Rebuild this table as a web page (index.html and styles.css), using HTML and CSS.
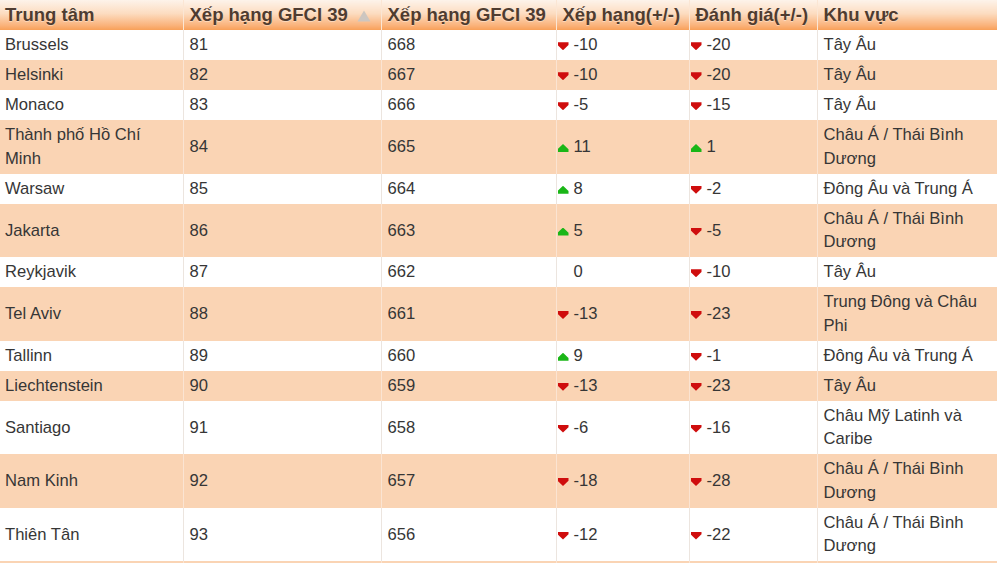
FILE: index.html
```html
<!DOCTYPE html>
<html lang="vi">
<head>
<meta charset="utf-8">
<title>GFCI 39</title>
<link rel="stylesheet" href="styles.css">
</head>
<body>
<table class="rank">
  <colgroup>
    <col class="c1"><col class="c2"><col class="c3"><col class="c4"><col class="c5"><col class="c6">
  </colgroup>
  <thead>
    <tr>
      <th>Trung tâm</th>
      <th>Xếp hạng GFCI 39 <svg class="sort" width="14" height="12" viewBox="0 0 14 12"><path d="M7 0.5 L13.5 11.5 L0.5 11.5 Z" fill="#cdc6c0"/></svg></th>
      <th>Xếp hạng GFCI 39</th>
      <th>Xếp hạng(+/-)</th>
      <th>Đánh giá(+/-)</th>
      <th>Khu vực</th>
    </tr>
  </thead>
  <tbody>
    <tr><td>Brussels</td><td>81</td><td>668</td><td class="chg"><i class="dn"></i>-10</td><td class="chg"><i class="dn"></i>-20</td><td>Tây Âu</td></tr>
    <tr><td>Helsinki</td><td>82</td><td>667</td><td class="chg"><i class="dn"></i>-10</td><td class="chg"><i class="dn"></i>-20</td><td>Tây Âu</td></tr>
    <tr><td>Monaco</td><td>83</td><td>666</td><td class="chg"><i class="dn"></i>-5</td><td class="chg"><i class="dn"></i>-15</td><td>Tây Âu</td></tr>
    <tr><td>Thành phố Hồ Chí Minh</td><td>84</td><td>665</td><td class="chg"><i class="up"></i>11</td><td class="chg"><i class="up"></i>1</td><td>Châu Á / Thái Bình Dương</td></tr>
    <tr><td>Warsaw</td><td>85</td><td>664</td><td class="chg"><i class="up"></i>8</td><td class="chg"><i class="dn"></i>-2</td><td>Đông Âu và Trung Á</td></tr>
    <tr><td>Jakarta</td><td>86</td><td>663</td><td class="chg"><i class="up"></i>5</td><td class="chg"><i class="dn"></i>-5</td><td>Châu Á / Thái Bình Dương</td></tr>
    <tr><td>Reykjavik</td><td>87</td><td>662</td><td class="chg"><i class="no"></i>0</td><td class="chg"><i class="dn"></i>-10</td><td>Tây Âu</td></tr>
    <tr><td>Tel Aviv</td><td>88</td><td>661</td><td class="chg"><i class="dn"></i>-13</td><td class="chg"><i class="dn"></i>-23</td><td>Trung Đông và Châu Phi</td></tr>
    <tr><td>Tallinn</td><td>89</td><td>660</td><td class="chg"><i class="up"></i>9</td><td class="chg"><i class="dn"></i>-1</td><td>Đông Âu và Trung Á</td></tr>
    <tr><td>Liechtenstein</td><td>90</td><td>659</td><td class="chg"><i class="dn"></i>-13</td><td class="chg"><i class="dn"></i>-23</td><td>Tây Âu</td></tr>
    <tr><td>Santiago</td><td>91</td><td>658</td><td class="chg"><i class="dn"></i>-6</td><td class="chg"><i class="dn"></i>-16</td><td>Châu Mỹ Latinh và Caribe</td></tr>
    <tr><td>Nam Kinh</td><td>92</td><td>657</td><td class="chg"><i class="dn"></i>-18</td><td class="chg"><i class="dn"></i>-28</td><td>Châu Á / Thái Bình Dương</td></tr>
    <tr><td>Thiên Tân</td><td>93</td><td>656</td><td class="chg"><i class="dn"></i>-12</td><td class="chg"><i class="dn"></i>-22</td><td>Châu Á / Thái Bình Dương</td></tr>
    <tr class="extra"><td></td><td></td><td></td><td></td><td></td><td></td></tr>
  </tbody>
</table>
</body>
</html>
```
FILE: styles.css
```css
html, body {
  margin: 0;
  padding: 0;
  background: #fff;
  overflow: hidden;
}
.rank {
  width: 997px;
  table-layout: fixed;
  border-collapse: collapse;
  font-family: "Liberation Sans", Arial, sans-serif;
  font-size: 16.6px;
  color: #363636;
}
.c1 { width: 183px; }
.c2 { width: 198px; }
.c3 { width: 175px; }
.c4 { width: 133px; }
.c5 { width: 128px; }
.c6 { width: 180px; }
.rank th {
  height: 30px;
  padding: 0 6px;
  text-align: left;
  font-size: 18.5px;
  font-weight: bold;
  color: #4f3c30;
  text-shadow: 0 1px 0 rgba(255,255,255,0.4);
  background: linear-gradient(to bottom, #fdf3ea 0%, #fcdcc0 45%, #fab27a 85%, #f8a058 100%);
  border-left: 1px solid #fbe6d4;
  white-space: nowrap;
  overflow: hidden;
}
.rank th:first-child,
.rank td:first-child {
  border-left: 0;
  padding-left: 5px;
}
.sort {
  vertical-align: -1px;
  margin-left: 4px;
}
.rank td {
  padding: 3.25px 6px;
  line-height: 23.5px;
  vertical-align: middle;
  border-left: 1px solid #ece5df;
}
.rank td.chg {
  padding-left: 1px;
}
.rank tbody tr:nth-child(even) td {
  background: #fad4b4;
  border-left-color: #fbe4d2;
}
.rank tr.extra td {
  height: 2px;
  padding: 0;
  line-height: 0;
}
.rank i {
  display: inline-block;
  width: 11px;
  height: 8px;
  margin: 0 5px 0 0;
  vertical-align: 0px;
}
.rank i.dn {
  background: #cf0d0d;
  clip-path: polygon(0 0, 100% 0, 100% 35%, 50% 100%, 0 35%);
}
.rank i.up {
  background: #1ab617;
  clip-path: polygon(50% 0, 100% 65%, 100% 100%, 0 100%, 0 65%);
}
```
